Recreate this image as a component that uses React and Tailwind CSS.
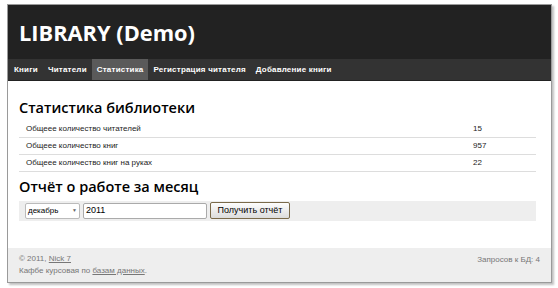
import React from 'react';

const nav = ['Книги', 'Читатели', 'Статистика', 'Регистрация читателя', 'Добавление книги'];

const stats = [
  { label: 'Общеее количество читателей', value: '15' },
  { label: 'Общеее количество книг', value: '957' },
  { label: 'Общеее количество книг на руках', value: '22' },
];

export default function App() {
  return (
    <div className="w-[558px] h-[288px] bg-white pt-[4px] pl-[7px]">
      <div className="w-[545px] h-[279px] border border-[#9a9a9a] shadow-[2px_2px_2px_rgba(0,0,0,0.25)] flex flex-col bg-white">
        <header className="bg-[#222222] h-[54px] flex items-center pl-[11px]">
          <h1 className="text-white font-bold text-[21.8px] leading-none pt-[2px] font-['Open_Sans',sans-serif]">
            LIBRARY (Demo)
          </h1>
        </header>
        <nav className="bg-[#333333] h-[22px] flex pl-[1px] border-b border-[#222]">
          {nav.map((item) => (
            <span
              key={item}
              className={
                'px-[5px] flex items-center text-[8px] font-bold text-white font-["Liberation_Sans",sans-serif] tracking-[0.2px] ' +
                (item === 'Статистика' ? 'bg-[#5a5a5a] text-[#eeeeee]' : '')
              }
            >
              {item}
            </span>
          ))}
        </nav>
        <main className="flex-1 px-[11px] pt-[20px]">
          <h2 className="text-[14.5px] font-semibold text-black leading-none font-['Open_Sans',sans-serif]">
            Статистика библиотеки
          </h2>
          <table className="w-[517px] mt-[5px] text-[8px] text-[#222] font-['Liberation_Sans',sans-serif]">
            <tbody>
              {stats.map((s) => (
                <tr key={s.label} className="border-b border-[#dddddd] h-[17px]">
                  <td className="pl-[7px]">{s.label}</td>
                  <td className="w-[63px]">{s.value}</td>
                </tr>
              ))}
            </tbody>
          </table>
          <h2 className="text-[14.5px] font-semibold text-black leading-none mt-[8px] font-['Open_Sans',sans-serif]">
            Отчёт о работе за месяц
          </h2>
          <div className="w-[517px] mt-[6px] bg-[#eeeeee] h-[20px] flex items-center gap-[3px] pl-[6px] text-[8px] font-['Liberation_Sans',sans-serif]">
            <div className="w-[55px] h-[16px] bg-white border border-[#bbb] rounded-[2px] flex items-center justify-between px-[2px]">
              <span>декабрь</span>
              <span className="text-[5px] text-[#666]">▼</span>
            </div>
            <div className="w-[124px] h-[16px] bg-white border border-[#aaa] rounded-[2px] flex items-center px-[2px] text-[9px]">
              2011
            </div>
            <button className="w-[80px] h-[17px] bg-gradient-to-b from-[#fdfdfd] to-[#dcdcdc] border border-[#7a6a4a] rounded-[2px] text-[9px] text-black">
              Получить отчёт
            </button>
          </div>
        </main>
        <footer className="bg-[#eeeeee] h-[34px] flex justify-between px-[11px] pt-[5px] text-[8px] text-[#777] font-['Liberation_Sans',sans-serif] leading-[12px]">
          <div>
            <div>
              © 2011, <span className="underline">Nick 7</span>
            </div>
            <div>
              Кафбе курсовая по <span className="underline">базам данных</span>.
            </div>
          </div>
          <div className="pt-[1px]">Запросов к БД: 4</div>
        </footer>
      </div>
    </div>
  );
}
